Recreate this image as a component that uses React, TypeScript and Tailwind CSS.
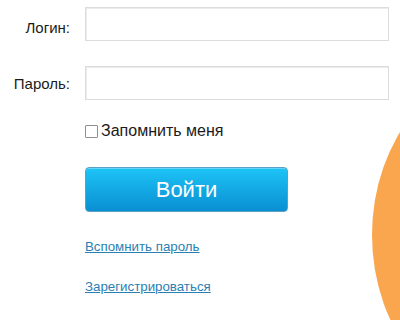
export default function App() {
  return (
    <div className="relative w-[400px] h-[320px] overflow-hidden bg-white font-['Liberation_Sans',Arial,sans-serif] text-[#1a1a1a]">
      {/* orange blob on the right edge */}
      <div className="absolute left-[372px] top-[58px] w-[300px] h-[354px] rounded-[50%] bg-[#faa64f]" />

      <form className="relative flex flex-col pt-[7px]">
        <div className="flex items-center gap-[15px]">
          <label className="w-[70px] text-right text-[15px] pt-[8px]">Логин:</label>
          <input
            type="text"
            className="w-[304px] h-[34px] border border-[#dcdcdc] bg-white shadow-[inset_1px_1px_0_#ececec] outline-none px-2"
          />
        </div>

        <div className="flex items-center gap-[15px] mt-[25px]">
          <label className="w-[70px] text-right text-[15px] pt-[2px]">Пароль:</label>
          <input
            type="password"
            className="w-[304px] h-[34px] border border-[#dcdcdc] bg-white shadow-[inset_1px_1px_0_#ececec] outline-none px-2"
          />
        </div>

        <div className="flex flex-col items-start pl-[85px]">
          <label className="flex items-center gap-[3px] mt-[22px] text-[16px] leading-[18px]">
            <span className="w-[13px] h-[13px] border border-[#8f8f8f] bg-white rounded-[1px]" />
            Запомнить меня
          </label>

          <button
            type="button"
            className="mt-[27px] w-[203px] h-[45px] rounded-[4px] border border-[#5a9fc4] bg-gradient-to-b from-[#1ec4f6] to-[#0a8fd2] text-white text-[22px] shadow-[inset_0_1px_0_rgba(255,255,255,0.3)]"
          >
            Войти
          </button>

          <a href="#" className="mt-[25px] text-[13.3px] text-[#2a7fb3] underline">
            Вспомнить пароль
          </a>
          <a href="#" className="mt-[20px] text-[13.3px] text-[#2a7fb3] underline">
            Зарегистрироваться
          </a>
        </div>
      </form>
    </div>
  );
}
